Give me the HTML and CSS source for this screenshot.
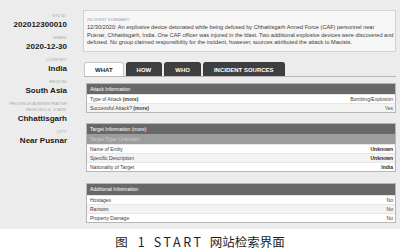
FILE: index.html
```html
<!DOCTYPE html>
<html>
<head>
<meta charset="utf-8">
<link rel="stylesheet" href="styles.css">
</head>
<body>
<div class="page">
  <aside class="sidebar">
    <div class="field"><div class="label">GTD ID:</div><div class="value">202012300010</div></div>
    <div class="field"><div class="label">WHEN:</div><div class="value">2020-12-30</div></div>
    <div class="field"><div class="label">COUNTRY:</div><div class="value">India</div></div>
    <div class="field"><div class="label">REGION:</div><div class="value">South Asia</div></div>
    <div class="field"><div class="label">PROVINCE/ADMINISTRATIVE<br>REGION/U.S. STATE:</div><div class="value">Chhattisgarh</div></div>
    <div class="field"><div class="label">CITY:</div><div class="value">Near Pusnar</div></div>
  </aside>
  <main class="main">
    <section class="summary">
      <div class="summary-label">INCIDENT SUMMARY:</div>
      <p class="summary-text">12/30/2020: An explosive device detonated while being defused by Chhattisgarh Armed Force (CAF) personnel near Pusnar, Chhattisgarh, India. One CAF officer was injured in the blast. Two additional explosive devices were discovered and defused. No group claimed responsibility for the incident, however, sources attributed the attack to Maoists.</p>
    </section>
    <nav class="tabs">
      <div class="tab active">WHAT</div>
      <div class="tab">HOW</div>
      <div class="tab">WHO</div>
      <div class="tab">INCIDENT SOURCES</div>
    </nav>
    <div class="sections">
      <section class="panel">
        <div class="panel-head">Attack Information</div>
        <div class="row"><span>Type of Attack <b>(more)</b></span><span class="val">Bombing/Explosion</span></div>
        <div class="row alt"><span>Successful Attack? <b>(more)</b></span><span class="val">Yes</span></div>
      </section>
      <section class="panel">
        <div class="panel-head">Target Information (more)</div>
        <div class="panel-sub">Target Type: Unknown</div>
        <div class="row"><span>Name of Entity</span><span class="val strong">Unknown</span></div>
        <div class="row alt"><span>Specific Description</span><span class="val strong">Unknown</span></div>
        <div class="row"><span>Nationality of Target</span><span class="val strong">India</span></div>
      </section>
      <section class="panel third">
        <div class="panel-head tall">Additional Information</div>
        <div class="row"><span>Hostages</span><span class="val">No</span></div>
        <div class="row alt"><span>Ransom</span><span class="val">No</span></div>
        <div class="row"><span>Property Damage</span><span class="val">No</span></div>
      </section>
    </div>
  </main>
</div>
<p class="caption"><span>图</span><span class="num">1</span><span class="start">START</span><span>网站检索界面</span></p>
</body>
</html>
```

FILE: styles.css
```css
* { box-sizing: border-box; }
html, body { margin: 0; padding: 0; }
body {
  width: 400px;
  height: 252px;
  background: #ffffff;
  font-family: "Liberation Sans", Arial, sans-serif;
  color: #333;
  overflow: hidden;
}
.page {
  height: 229px;
  background: #ececec;
  display: flex;
}
.sidebar {
  width: 83px;
  flex: none;
  padding: 13px 16px 0 0;
  text-align: right;
}
.field { margin-bottom: 5px; }
.label {
  font-size: 4.2px;
  line-height: 6px;
  color: #a8a8a8;
}
.value {
  font-size: 8px;
  line-height: 11px;
  font-weight: bold;
  color: #1a1a1a;
}
.main {
  flex: 1;
  padding: 10px 4px 0 0;
}
.summary {
  height: 42px;
  background: #f6f6f6;
  border: 1px solid #d2d2d2;
  padding: 6px 1px 0 3px;
}
.summary-label {
  font-size: 4.2px;
  line-height: 6px;
  color: #a0a0a0;
}
.summary-text {
  margin: 1px 0 0;
  font-size: 5.6px;
  line-height: 7.5px;
  color: #3a3a3a;
}
.tabs {
  display: flex;
  gap: 2px;
  margin: 10px 0 0 1px;
  border-bottom: 1px solid #b8b8b8;
}
.tab {
  height: 14px;
  padding: 0 10px;
  font-size: 6px;
  line-height: 14px;
  font-weight: bold;
  color: #fff;
  background: #3f3f3f;
  border-radius: 3px 3px 0 0;
  border: 1px solid #3a3a3a;
  border-bottom: none;
}
.tab.active {
  background: #fff;
  color: #222;
  border-color: #c8c8c8;
}
.sections {
  padding: 6px 0 0 3px;
  display: flex;
  flex-direction: column;
  gap: 10px;
}
.panel {
  border: 1px solid #b6b6b6;
  background: #fff;
}
.panel.third { margin-top: 1px; }
.panel-head {
  height: 10px;
  line-height: 10px;
  background: #686868;
  color: #fff;
  font-size: 5px;
  padding: 0 3px;
}
.panel-head.tall { height: 11px; line-height: 11px; }
.panel-sub {
  height: 10px;
  line-height: 10px;
  background: #9d9d9d;
  color: #cfcfcf;
  font-size: 5px;
  padding: 0 3px;
}
.row {
  height: 9px;
  line-height: 9px;
  display: flex;
  justify-content: space-between;
  font-size: 5px;
  padding: 0 2px 0 3px;
  color: #3c3c3c;
  background: #fff;
  border-top: 1px solid #e6e6e6;
}
.row.alt { background: #f3f3f3; }
.row b { font-weight: bold; }
.val { color: #444; }
.val.strong { font-weight: bold; color: #2a2a2a; }
.caption {
  margin: 0;
  padding-top: 3px;
  text-align: center;
  font-family: "Noto Sans CJK SC", sans-serif;
  font-size: 12.5px;
  line-height: 19px;
  color: #1e1e1e;
}
.caption .num { margin: 0 9px 0 10px; }
.caption .start { letter-spacing: 2.6px; margin-right: 6px; }
```
